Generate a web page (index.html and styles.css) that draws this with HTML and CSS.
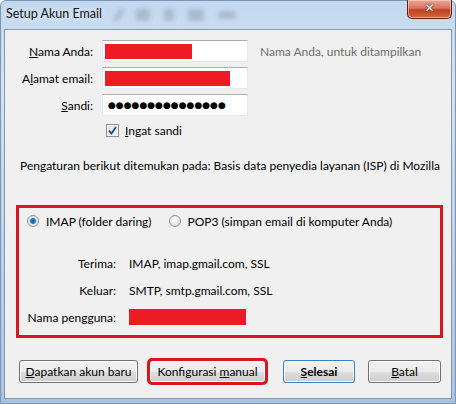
FILE: index.html
```html
<!DOCTYPE html>
<html lang="id">
<head>
  <meta charset="UTF-8">
  <title>Setup Akun Email</title>
  <link rel="stylesheet" href="styles.css">
</head>
<body>
  <div class="window">
    <div class="titlebar">
      <span class="title">Setup Akun Email</span>
      <div class="ghosts">
        <span class="ghost g1"></span>
        <span class="ghost g2"></span>
        <span class="ghost g3"></span>
        <span class="ghost g4"></span>
        <span class="ghost g5"></span>
      </div>
      <div class="close-btn">✕</div>
    </div>

    <div class="client">
      <div class="account-form">
        <label class="lbl"><u>N</u>ama Anda:</label>
        <div class="field"><span class="redact r1"></span></div>
        <span class="hint">Nama Anda, untuk ditampilkan</span>

        <label class="lbl">A<u>l</u>amat email:</label>
        <div class="field"><span class="redact r2"></span></div>
        <span></span>

        <label class="lbl"><u>S</u>andi:</label>
        <div class="field"><span class="dots">●●●●●●●●●●●●●●●</span></div>
        <span></span>

        <span></span>
        <div class="check-row">
          <span class="checkbox">
            <svg width="9" height="9" viewBox="0 0 9 9"><path d="M1 4.5 L3.5 7.5 L8 1" fill="none" stroke="#26458a" stroke-width="1.8"/></svg>
          </span>
          <span><u>I</u>ngat sandi</span>
        </div>
        <span></span>
      </div>

      <p class="info">Pengaturan berikut ditemukan pada: Basis data penyedia layanan (ISP) di Mozilla</p>

      <div class="server-box">
        <div class="radio-row">
          <span class="radio checked"></span>
          <span>IMAP (folder daring)</span>
          <span class="radio pop"></span>
          <span>POP3 (simpan email di komputer Anda)</span>
        </div>
        <div class="server-grid">
          <span class="lbl">Terima:</span>
          <span>IMAP, imap.gmail.com, SSL</span>
          <span class="lbl">Keluar:</span>
          <span>SMTP, smtp.gmail.com, SSL</span>
          <span class="lbl">Nama pengguna:</span>
          <span><span class="redact r3"></span></span>
        </div>
      </div>

      <div class="buttons">
        <div class="btn-group">
          <button class="btn w-new"><u>D</u>apatkan akun baru</button>
          <button class="btn w-manual marked">Konfigurasi <u>m</u>anual</button>
        </div>
        <div class="btn-group right">
          <button class="btn w-done default"><u>S</u>elesai</button>
          <button class="btn w-cancel"><u>B</u>atal</button>
        </div>
      </div>
    </div>
  </div>
</body>
</html>
```

FILE: styles.css
```css
body {
  margin: 0;
  width: 456px;
  height: 404px;
  overflow: hidden;
  font-family: Lato, "Noto Sans", sans-serif;
  font-size: 12px;
  color: #000;
}

.window {
  width: 456px;
  height: 404px;
  display: flex;
  flex-direction: column;
  background: linear-gradient(180deg, #c2d8ef 0%, #d4e4f4 20%, #bcd3ec 60%, #a9c4e3 100%);
  box-sizing: border-box;
  border: 1px solid #7d95b3;
  border-radius: 6px 6px 0 0;
}

.titlebar {
  height: 28px;
  display: flex;
  align-items: flex-start;
  position: relative;
}

.title {
  padding: 5px 0 0 5px;
  font-size: 12.5px;
  color: #111;
  text-shadow: 0 0 6px #eef5fc;
}

.ghosts {
  display: flex;
  gap: 14px;
  margin: 8px 0 0 14px;
  filter: blur(2px);
  opacity: 0.45;
}

.ghost {
  display: block;
  height: 12px;
  background: #8a96a6;
  border-radius: 2px;
}

.g1 { width: 6px; transform: skewX(-30deg); }
.g2 { width: 14px; }
.g3 { width: 10px; }
.g4 { width: 16px; }
.g5 { width: 18px; height: 8px; margin-top: 2px; border-radius: 8px; }

.close-btn {
  position: absolute;
  right: 3px;
  top: -1px;
  width: 45px;
  height: 19px;
  box-sizing: border-box;
  border: 1px solid #5e2119;
  border-top: none;
  border-radius: 0 0 5px 5px;
  background: linear-gradient(180deg, #e9a99a 0%, #d9735f 45%, #c2401f 55%, #cf6a3e 100%);
  box-shadow: inset 0 0 0 1px rgba(255, 220, 210, 0.55);
  color: #fff;
  font-family: "DejaVu Sans", sans-serif;
  font-size: 12px;
  font-weight: bold;
  text-align: center;
  line-height: 17px;
  text-shadow: 0 0 2px #5e2119, 0 0 1px #3a120c;
}

.client {
  flex: 1;
  margin: 0 3px 4px 3px;
  border: 1px solid #8497ae;
  background: #f0f0f0;
  box-sizing: border-box;
}

.account-form {
  display: grid;
  grid-template-columns: 87px 146px 1fr;
  column-gap: 10px;
  row-gap: 5px;
  margin-top: 10px;
  align-items: center;
}

.lbl {
  text-align: right;
  white-space: nowrap;
}

.account-form .lbl {
  margin-right: -1px;
}

.field {
  height: 22px;
  box-sizing: border-box;
  border: 1px solid #e3e9ef;
  border-top-color: #abadb3;
  background: #fff;
  display: flex;
  align-items: center;
  padding-left: 2px;
}

.redact {
  display: block;
  background: #ed1c24;
}

.r1 { width: 87px; height: 15px; }
.r2 { width: 125px; height: 15px; }
.r3 { width: 117px; height: 14px; }

.dots {
  font-family: "DejaVu Sans", sans-serif;
  font-size: 9px;
  padding-left: 3px;
}

.hint {
  color: #6d6d6d;
  margin-left: 2px;
  white-space: nowrap;
}

.check-row {
  display: flex;
  align-items: center;
  gap: 6px;
  height: 19px;
  padding-left: 4px;
}

.checkbox {
  width: 13px;
  height: 13px;
  box-sizing: border-box;
  border: 1px solid #8e8f8f;
  background: linear-gradient(135deg, #dcdcdc, #fbfbfb);
  display: flex;
  align-items: center;
  justify-content: center;
  box-shadow: inset 0 0 0 1px #f4f4f4;
}

.info {
  margin: 18px 0 0 15px;
  line-height: 16px;
  white-space: nowrap;
}

.server-box {
  margin: 31px 8px 0 11px;
  height: 133px;
  box-sizing: border-box;
  border: 3px solid #d9151d;
  padding: 5px 0 0 8px;
}

.radio-row {
  display: flex;
  align-items: center;
  height: 16px;
}

.radio {
  width: 12px;
  height: 12px;
  box-sizing: border-box;
  border-radius: 50%;
  border: 1px solid #8e8f8f;
  background: radial-gradient(circle at 40% 35%, #ffffff, #d2d2d2);
  margin-right: 7px;
}

.radio.checked {
  background: radial-gradient(circle, #1c5f9e 0, #2b78c0 2.5px, #dfe9f3 3.5px, #e6e6e6 6px);
}

.radio.pop {
  margin-left: 17px;
}

.server-grid {
  display: grid;
  grid-template-columns: 97px 1fr;
  column-gap: 13px;
  row-gap: 11px;
  margin: 26px 0 0 -8px;
  align-items: center;
}

.server-grid span {
  height: 16px;
  display: flex;
  align-items: center;
}

.server-grid .lbl {
  justify-content: flex-end;
}

.buttons {
  display: flex;
  margin: 22px 10px 0 14px;
}

.btn-group {
  display: flex;
  gap: 11px;
}

.btn-group.right {
  margin-left: auto;
  gap: 13px;
}

.btn {
  height: 23px;
  box-sizing: border-box;
  border: 1px solid #707070;
  border-radius: 3px;
  background: linear-gradient(180deg, #f2f2f2 0%, #ebebeb 50%, #dddddd 51%, #cfcfcf 100%);
  box-shadow: inset 0 0 0 1px #fcfcfc;
  font-family: inherit;
  font-size: inherit;
  color: #000;
  padding: 0;
}

.w-new { width: 119px; }
.w-manual { width: 117px; }
.w-done { width: 72px; }
.w-cancel { width: 73px; }

.btn.default {
  font-weight: bold;
  border-color: #3c7fb1;
}

.btn.marked {
  outline: 3px solid #d9151d;
  outline-offset: -1px;
}
```
